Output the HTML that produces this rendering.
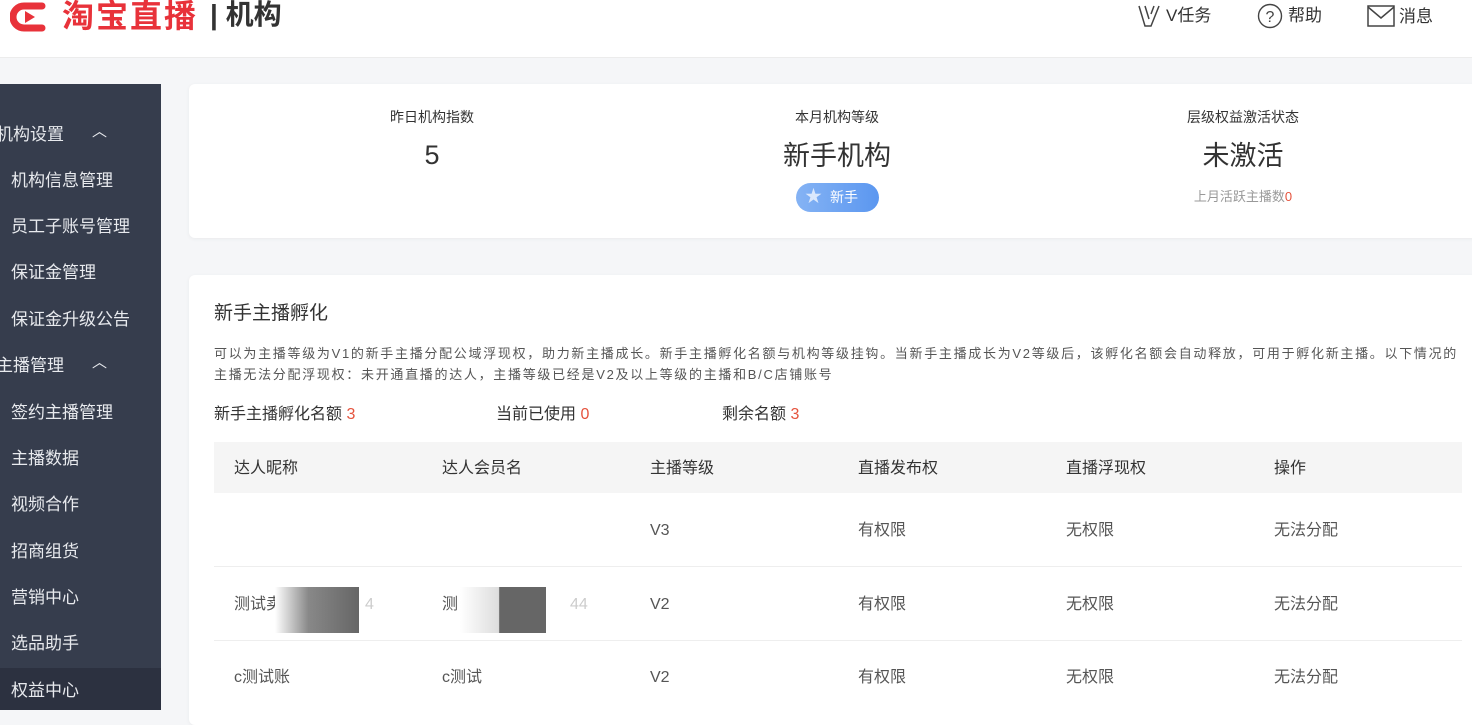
<!DOCTYPE html>
<html><head><meta charset="utf-8"><style>
*{margin:0;padding:0;box-sizing:border-box}
body{width:1472px;height:710px;overflow:hidden;background:#f5f6f8;font-family:"Liberation Sans","Noto Sans CJK SC",sans-serif;color:#333;position:relative}
.hdr{position:absolute;left:0;top:0;width:1472px;height:58px;background:#fff;border-bottom:1px solid #ececec}
.abs{position:absolute;white-space:nowrap;line-height:1.2}
.side{position:absolute;left:0;top:84px;width:161px;height:626px;background:#363d4d}
.side div{position:absolute;color:#e8eaee;font-size:17px;white-space:nowrap;line-height:1.2}
.card{position:absolute;background:#fff;border-radius:6px;box-shadow:0 1px 4px rgba(0,0,0,.05)}
.c{position:absolute;text-align:center;white-space:nowrap;line-height:1.2}
.row{position:absolute;left:214px;width:1248px;border-bottom:1px solid #eee}
.cell{position:absolute;font-size:16px;color:#555;white-space:nowrap;line-height:20px;height:20px}
.r{color:#e5533d}
</style></head><body>
<div class="hdr">
  <svg class="abs" style="left:10px;top:2px" width="44" height="30" viewBox="0 0 44 30"><path d="M32 4 H14 a11 11 0 0 0 0 22 H32" fill="none" stroke="#e8323a" stroke-width="7" stroke-linecap="round"/><path d="M15 9 L25 15 L15 21z" fill="#e8323a"/></svg>
  <div class="abs" style="left:62px;top:-3px;font-size:32px;font-weight:bold;color:#e8323a;letter-spacing:2px">淘宝直播</div>
  <div class="abs" style="left:210px;top:-2px;font-size:28px;font-weight:bold;color:#333">| 机构</div>
  <svg class="abs" style="left:1137px;top:4px" width="26" height="24" viewBox="0 0 26 24"><path d="M2 2 L8 22 H14 L22 2 M8 2 L12 15 M17 2 l-3 8" fill="none" stroke="#444" stroke-width="1.5"/></svg>
  <div class="abs" style="left:1166px;top:6px;font-size:17px;color:#333">V任务</div>
  <svg class="abs" style="left:1257px;top:3px" width="26" height="26" viewBox="0 0 26 26"><circle cx="13" cy="13" r="11.5" fill="none" stroke="#444" stroke-width="1.4"/><text x="13" y="19" font-size="16" text-anchor="middle" fill="#444" font-family="Liberation Sans">?</text></svg>
  <div class="abs" style="left:1288px;top:6px;font-size:17px;color:#333">帮助</div>
  <svg class="abs" style="left:1367px;top:5px" width="28" height="22" viewBox="0 0 28 22"><rect x="1" y="1" width="26" height="20" fill="none" stroke="#444" stroke-width="1.5"/><path d="M1 2 L14 13 L27 2" fill="none" stroke="#444" stroke-width="1.5"/></svg>
  <div class="abs" style="left:1399px;top:7px;font-size:17px;color:#333">消息</div>
</div>
<div class="side">
  <div style="left:-4px;top:41px">机构设置</div><div style="left:92px;top:39px;font-size:15px">︿</div>
  <div style="left:11px;top:87px">机构信息管理</div>
  <div style="left:11px;top:133px">员工子账号管理</div>
  <div style="left:11px;top:179px">保证金管理</div>
  <div style="left:11px;top:226px">保证金升级公告</div>
  <div style="left:-4px;top:272px">主播管理</div><div style="left:92px;top:270px;font-size:15px">︿</div>
  <div style="left:11px;top:319px">签约主播管理</div>
  <div style="left:11px;top:365px">主播数据</div>
  <div style="left:11px;top:411px">视频合作</div>
  <div style="left:11px;top:458px">招商组货</div>
  <div style="left:11px;top:504px">营销中心</div>
  <div style="left:11px;top:550px">选品助手</div>
  <div style="left:0;top:584px;width:161px;height:42px;background:#2c3140"></div>
  <div style="left:11px;top:597px">权益中心</div>
</div>
<div class="card" style="left:189px;top:84px;width:1290px;height:154px"></div>
<div class="c" style="left:332px;top:109px;width:200px;font-size:14px">昨日机构指数</div>
<div class="c" style="left:332px;top:139px;width:200px;font-size:27px">5</div>
<div class="c" style="left:737px;top:109px;width:200px;font-size:14px">本月机构等级</div>
<div class="c" style="left:737px;top:140px;width:200px;font-size:27px">新手机构</div>
<div class="abs" style="left:796px;top:183px;width:83px;height:29px;border-radius:15px;background:linear-gradient(90deg,#85b3f4,#5b97f0)"></div>
<div class="abs" style="left:805px;top:187px;color:#dbe8fc;font-size:17px">★</div>
<div class="abs" style="left:830px;top:189px;color:#fff;font-size:14px">新手</div>
<div class="c" style="left:1143px;top:109px;width:200px;font-size:14px">层级权益激活状态</div>
<div class="c" style="left:1143px;top:140px;width:200px;font-size:27px">未激活</div>
<div class="c" style="left:1143px;top:189px;width:200px;font-size:13px;color:#999">上月活跃主播数<span class="r">0</span></div>
<div class="card" style="left:189px;top:275px;width:1290px;height:450px"></div>
<div class="abs" style="left:214px;top:303px;font-size:19px">新手主播孵化</div>
<div class="abs" style="left:214px;top:343px;font-size:13px;color:#555;line-height:21px;letter-spacing:1.7px">可以为主播等级为V1的新手主播分配公域浮现权，助力新主播成长。新手主播孵化名额与机构等级挂钩。当新手主播成长为V2等级后，该孵化名额会自动释放，可用于孵化新主播。以下情况的<br>主播无法分配浮现权：未开通直播的达人，主播等级已经是V2及以上等级的主播和B/C店铺账号</div>
<div class="abs" style="left:214px;top:405px;font-size:16px">新手主播孵化名额 <span class="r">3</span></div>
<div class="abs" style="left:496px;top:405px;font-size:16px">当前已使用 <span class="r">0</span></div>
<div class="abs" style="left:722px;top:405px;font-size:16px">剩余名额 <span class="r">3</span></div>
<div class="row" style="top:442px;height:51px;background:#f5f5f5;border:none"></div>
<div class="cell" style="left:234px;top:459px;color:#333">达人昵称</div>
<div class="cell" style="left:442px;top:459px;color:#333">达人会员名</div>
<div class="cell" style="left:650px;top:459px;color:#333">主播等级</div>
<div class="cell" style="left:858px;top:459px;color:#333">直播发布权</div>
<div class="cell" style="left:1066px;top:459px;color:#333">直播浮现权</div>
<div class="cell" style="left:1274px;top:459px;color:#333">操作</div>
<div class="row" style="top:493px;height:74px"></div>
<div class="row" style="top:567px;height:74px"></div>
<div class="cell" style="left:650px;top:521px">V3</div><div class="cell" style="left:858px;top:521px">有权限</div><div class="cell" style="left:1066px;top:521px">无权限</div><div class="cell" style="left:1274px;top:521px">无法分配</div>
<div class="cell" style="left:234px;top:595px">测试卖</div>
<div class="abs" style="left:275px;top:587px;width:84px;height:46px;background:linear-gradient(90deg,#fff,#888 40%,#666)"></div>
<div class="cell" style="left:365px;top:595px;color:#ccc">4</div>
<div class="cell" style="left:442px;top:595px">测</div>
<div class="abs" style="left:460px;top:587px;width:86px;height:46px;background:linear-gradient(90deg,#fff,#ddd 45%,#666 46%)"></div>
<div class="cell" style="left:570px;top:595px;color:#ccc">44</div>
<div class="cell" style="left:650px;top:595px">V2</div><div class="cell" style="left:858px;top:595px">有权限</div><div class="cell" style="left:1066px;top:595px">无权限</div><div class="cell" style="left:1274px;top:595px">无法分配</div>
<div class="cell" style="left:234px;top:668px">c测试账</div>
<div class="cell" style="left:442px;top:668px">c测试</div>
<div class="cell" style="left:650px;top:668px">V2</div><div class="cell" style="left:858px;top:668px">有权限</div><div class="cell" style="left:1066px;top:668px">无权限</div><div class="cell" style="left:1274px;top:668px">无法分配</div>
</body></html>
